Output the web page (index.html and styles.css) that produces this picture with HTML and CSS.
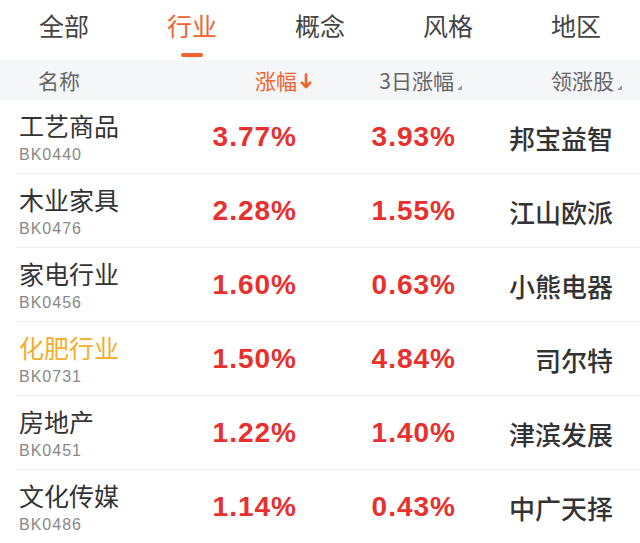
FILE: index.html
```html
<!DOCTYPE html>
<html lang="zh-CN">
<head>
<meta charset="utf-8">
<title>行业</title>
<link rel="stylesheet" href="styles.css">
</head>
<body>
<div class="page">
  <nav class="tabs">
    <div class="tab">全部</div>
    <div class="tab active">行业</div>
    <div class="tab">概念</div>
    <div class="tab">风格</div>
    <div class="tab">地区</div>
  </nav>
  <div class="thead">
    <div class="th th-name">名称</div>
    <div class="th th-chg sorted">涨幅<svg class="arrow" width="12" height="16" viewBox="0 0 12 16"><path d="M6 1.5V14M1.8 9.6L6 14L10.2 9.6" fill="none" stroke="currentColor" stroke-width="2.6" stroke-linecap="round" stroke-linejoin="round"/></svg></div>
    <div class="th th-3d">3日涨幅<span class="tri"></span></div>
    <div class="th th-lead">领涨股<span class="tri"></span></div>
  </div>
  <div class="list">
    <div class="row">
      <div class="name"><div class="cn">工艺商品</div><div class="code">BK0440</div></div>
      <div class="pct">3.77%</div><div class="pct">3.93%</div><div class="lead">邦宝益智</div>
    </div>
    <div class="row">
      <div class="name"><div class="cn">木业家具</div><div class="code">BK0476</div></div>
      <div class="pct">2.28%</div><div class="pct">1.55%</div><div class="lead">江山欧派</div>
    </div>
    <div class="row">
      <div class="name"><div class="cn">家电行业</div><div class="code">BK0456</div></div>
      <div class="pct">1.60%</div><div class="pct">0.63%</div><div class="lead">小熊电器</div>
    </div>
    <div class="row">
      <div class="name"><div class="cn hl">化肥行业</div><div class="code">BK0731</div></div>
      <div class="pct">1.50%</div><div class="pct">4.84%</div><div class="lead">司尔特</div>
    </div>
    <div class="row">
      <div class="name"><div class="cn">房地产</div><div class="code">BK0451</div></div>
      <div class="pct">1.22%</div><div class="pct">1.40%</div><div class="lead">津滨发展</div>
    </div>
    <div class="row">
      <div class="name"><div class="cn">文化传媒</div><div class="code">BK0486</div></div>
      <div class="pct">1.14%</div><div class="pct">0.43%</div><div class="lead">中广天择</div>
    </div>
  </div>
</div>
</body>
</html>
```

FILE: styles.css
```css
* { box-sizing: border-box; }
html, body { margin: 0; padding: 0; background: #fff; }
body {
  font-family: "Noto Sans CJK SC", "Liberation Sans", sans-serif;
  color: #333;
  width: 640px;
  overflow: hidden;
}
.tabs {
  display: grid;
  grid-template-columns: repeat(5, 1fr);
  height: 60px;
}
.tab {
  position: relative;
  text-align: center;
  font-size: 25px;
  line-height: 50px;
  color: #444;
}
.tab.active { color: #f0632c; }
.tab.active::after {
  content: "";
  position: absolute;
  left: 53px;
  top: 53px;
  width: 22px;
  height: 4px;
  border-radius: 2px;
  background: #f0632c;
}
.thead {
  display: grid;
  grid-template-columns: 1fr 140px 150px 160px;
  align-items: center;
  height: 40px;
  background: #f5f6f8;
  padding-right: 18px;
  font-size: 21px;
  color: #666;
}
.th { display: flex; align-items: center; justify-content: flex-end; line-height: 40px; }
.th-name { justify-content: flex-start; padding-left: 38px; }
.sorted { color: #f0632c; }
.arrow { margin-left: 3px; margin-top: 1px; }
.tri {
  align-self: flex-end;
  margin: 0 0 10px 3px;
  width: 0; height: 0;
  border-left: 5px solid transparent;
  border-bottom: 5px solid #9a9a9a;
}
.row {
  display: grid;
  grid-template-columns: 1fr 120px 159px 157px;
  align-items: center;
  height: 74px;
  padding-right: 27px;
  position: relative;
}
.row::after {
  content: "";
  position: absolute;
  left: 16px; right: 0; bottom: 0;
  height: 1px;
  background: #eeeeee;
}
.name { padding-left: 19px; }
.cn { font-size: 25px; line-height: 30px; color: #333; }
.cn.hl { color: #f2ae2e; }
.code {
  font-family: "Liberation Sans", sans-serif;
  font-size: 16px;
  line-height: 20px;
  letter-spacing: 1px;
  color: #888;
  margin-top: 5px;
}
.pct {
  text-align: right;
  font-family: "Liberation Sans", sans-serif;
  font-weight: 700;
  font-size: 28px;
  letter-spacing: 1px;
  color: #e8302e;
}
.lead {
  text-align: right;
  font-size: 26px;
  font-weight: 500;
  color: #333;
}
```
